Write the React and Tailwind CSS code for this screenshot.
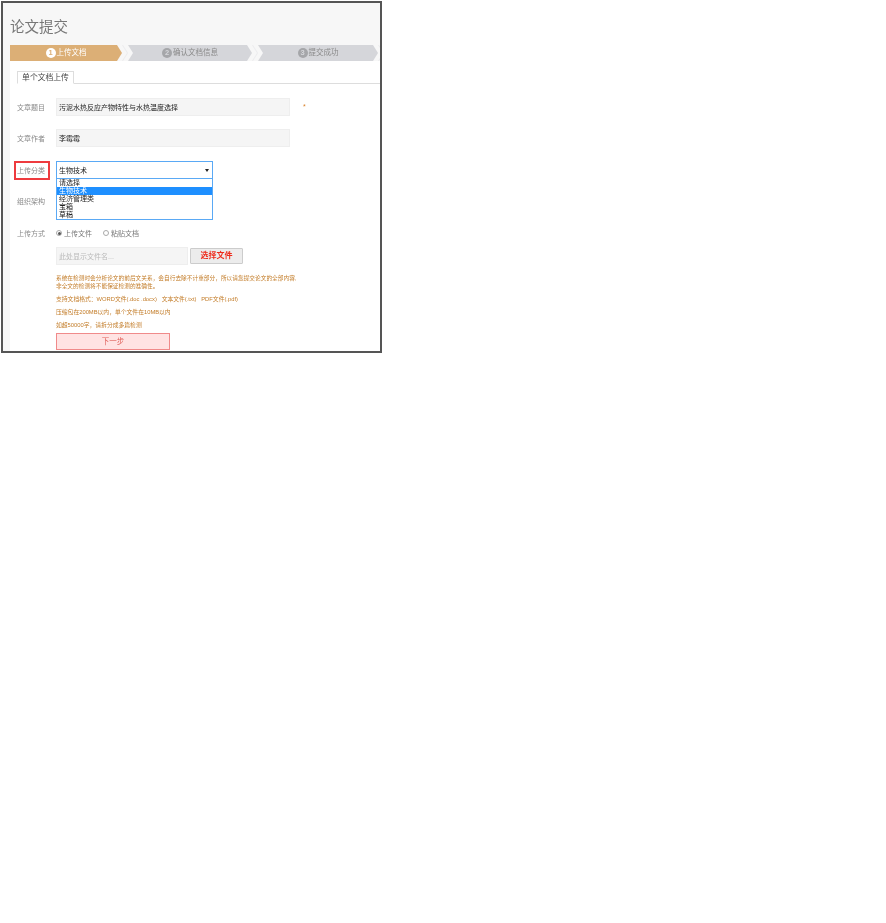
const font = { fontFamily: '"Liberation Sans","Noto Sans CJK SC",sans-serif' };

function Step({ n, label, active, first, width }) {
  return (
    <div className={`relative shrink-0 h-[16px] flex items-center justify-center gap-[1px] ${width} ${first ? '[clip-path:polygon(0_0,calc(100%-5px)_0,100%_50%,calc(100%-5px)_100%,0_100%)]' : '[clip-path:polygon(0_0,calc(100%-5px)_0,100%_50%,calc(100%-5px)_100%,0_100%,5px_50%)]'} ${active ? 'bg-[#dcaf76] text-white' : 'bg-[#d5d6da] text-[#8a8a8a]'}`}>
      <span className={`w-[10px] h-[10px] rounded-full flex items-center justify-center text-[7.5px] leading-none font-bold ${active ? 'bg-white text-[#dcaf76]' : 'bg-[#a5a6a9] text-[#d5d6da]'}`}>{n}</span>
      <span className="text-[7.5px] leading-none">{label}</span>
    </div>
  );
}

function Gap() {
  return <div className="shrink-0 w-[6px] h-[16px] bg-[#ebebed] [clip-path:polygon(0_0,1px_0,100%_50%,1px_100%,0_100%,5px_50%)]" />;
}

function Row({ label, className, children }) {
  return (
    <div className={`flex items-center ${className}`}>
      <div className="w-[39px] text-[7px] leading-none text-[#8a8a8a]">{label}</div>
      {children}
    </div>
  );
}

function Radio({ checked, label }) {
  return (
    <div className="flex items-center gap-[2px]">
      <span className="w-[6px] h-[6px] rounded-full border border-[#aaa] bg-white flex items-center justify-center">
        {checked && <span className="w-[3px] h-[3px] rounded-full bg-[#555]" />}
      </span>
      <span className="text-[7px] leading-none text-[#777]">{label}</span>
    </div>
  );
}

export default function App() {
  return (
    <div style={font} className="w-[886px] h-[923px] bg-white">
      <div className="ml-[1px] mt-[1px] w-[381px] h-[352px] border-2 border-[#555] overflow-hidden bg-[#f7f7f7] blur-[0.4px] float-left">
        <div className="h-[42px] pl-[7px] pt-[14px]">
          <div className="text-[14.5px] leading-[20px] text-[#777]">论文提交</div>
        </div>
        <div className="pl-[7px] flex h-[16px]">
          <Step n="1" label="上传文档" active first width="w-[112px]" />
          <Gap />
          <Step n="2" label="确认文档信息" width="w-[124px]" />
          <Gap />
          <Step n="3" label="提交成功" width="w-[120px]" />
          <Gap />
        </div>
        <div className="relative ml-[7px] h-[291px] bg-white pt-[10px] pl-[7px]">
          <div className="border-b border-[#ddd] h-[13px] flex">
            <div className="w-[57px] h-[13px] border border-[#ddd] border-b-white bg-white flex items-center justify-center text-[7.8px] leading-none text-[#444]">单个文档上传</div>
          </div>
          <Row label="文章题目" className="mt-[14px] h-[18px]">
            <div className="w-[234px] h-[18px] bg-[#f5f5f5] border border-[#eee] flex items-center pl-[2px] text-[7px] leading-none text-[#222]">污泥水热反应产物特性与水热温度选择</div>
            <span className="ml-[13px] text-[7px] text-[#d9822b]">*</span>
          </Row>
          <Row label="文章作者" className="mt-[13px] h-[18px]">
            <div className="w-[234px] h-[18px] bg-[#f5f5f5] border border-[#eee] flex items-center pl-[2px] text-[7px] leading-none text-[#222]">李霉霉</div>
          </Row>
          <Row label="上传分类" className="mt-[14px] h-[18px]">
            <div className="w-[157px] h-[18px] bg-white border border-[#5aa9f5] flex items-center justify-between pl-[2px] pr-[3px] text-[7px] leading-none text-[#222]">
              <span>生物技术</span>
              <span className="w-0 h-0 border-x-[2.5px] border-x-transparent border-t-[3px] border-t-[#222]" />
            </div>
          </Row>
          <div className="absolute left-[4px] top-[100px] w-[36px] h-[19px] border-2 border-[#ee3b3f]" />
          <div className="absolute left-[46px] top-[118px] w-[157px] h-[41px] bg-white border border-[#5aa9f5] border-t-0 text-[7px] leading-[8px] text-[#222]">
            <div className="pl-[2px] h-[8px]">请选择</div>
            <div className="pl-[2px] h-[8px] bg-[#1e8fff] text-white">生物技术</div>
            <div className="pl-[2px] h-[8px]">经济管理类</div>
            <div className="pl-[2px] h-[8px]">宝箱</div>
            <div className="pl-[2px] h-[8px]">草稿</div>
          </div>
          <Row label="组织架构" className="mt-[13px] h-[18px]" />
          <Row label="上传方式" className="mt-[14px] h-[18px]">
            <div className="flex gap-[11px]">
              <Radio checked label="上传文件" />
              <Radio label="粘贴文档" />
            </div>
          </Row>
          <div className="ml-[39px] mt-[5px] flex items-center gap-[2px]">
            <div className="w-[132px] h-[18px] bg-[#f5f5f5] border border-[#eee] flex items-center pl-[2px] text-[7px] leading-none text-[#bbb]">此处显示文件名...</div>
            <div className="w-[53px] h-[16px] bg-[#ececec] border border-[#ccc] rounded-[1px] flex items-center justify-center text-[8px] leading-none font-bold text-[#ee2a1b]">选择文件</div>
          </div>
          <div className="ml-[39px] mt-[9px] text-[5.8px] leading-[8px] text-[#c37c28] whitespace-nowrap">
            <div className="text-[5.7px]">系统在检测时会分析论文的前后文关系，会自行去除不计重部分，所以请您提交论文的全部内容,</div>
            <div className="text-[5.7px]">非全文的检测将不能保证检测的准确性。</div>
            <div className="mt-[5px]">支持文档格式：WORD文件(.doc .docx)&nbsp;&nbsp;&nbsp;文本文件(.txt)&nbsp;&nbsp;&nbsp;PDF文件(.pdf)</div>
            <div className="mt-[5px]">压缩包在200MB以内，单个文件在10MB以内</div>
            <div className="mt-[5px]">如超50000字，请拆分成多篇检测</div>
          </div>
          <div className="ml-[39px] mt-[4px] w-[114px] h-[17px] bg-[#ffe3e3] border border-[#f08a8a] flex items-center justify-center text-[7.5px] leading-none text-[#e0605a]">下一步</div>
        </div>
      </div>
    </div>
  );
}
